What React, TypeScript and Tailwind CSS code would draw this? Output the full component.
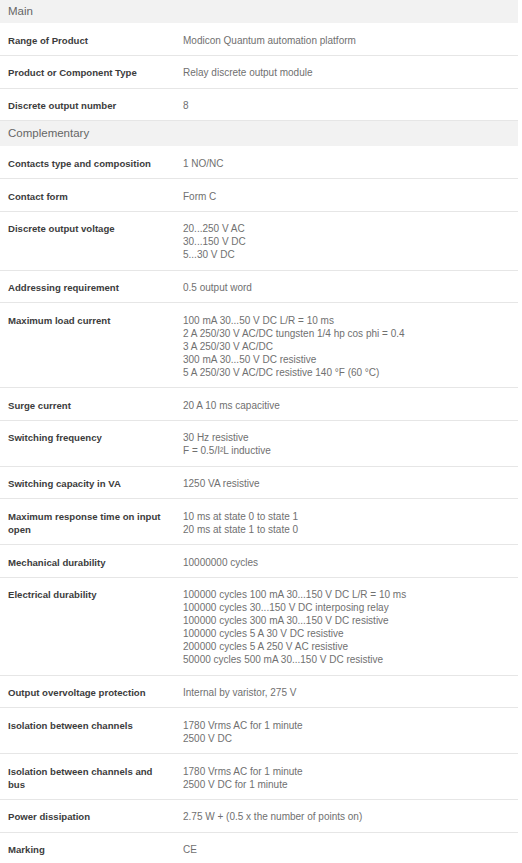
const main = [
  { label: "Range of Product", value: ["Modicon Quantum automation platform"] },
  { label: "Product or Component Type", value: ["Relay discrete output module"] },
  { label: "Discrete output number", value: ["8"] },
];

const complementary = [
  { label: "Contacts type and composition", value: ["1 NO/NC"] },
  { label: "Contact form", value: ["Form C"] },
  { label: "Discrete output voltage", value: ["20...250 V AC", "30...150 V DC", "5...30 V DC"] },
  { label: "Addressing requirement", value: ["0.5 output word"] },
  {
    label: "Maximum load current",
    value: [
      "100 mA 30...50 V DC L/R = 10 ms",
      "2 A 250/30 V AC/DC tungsten 1/4 hp cos phi = 0.4",
      "3 A 250/30 V AC/DC",
      "300 mA 30...50 V DC resistive",
      "5 A 250/30 V AC/DC resistive 140 °F (60 °C)",
    ],
  },
  { label: "Surge current", value: ["20 A 10 ms capacitive"] },
  { label: "Switching frequency", value: ["30 Hz resistive", "F = 0.5/I²L inductive"] },
  { label: "Switching capacity in VA", value: ["1250 VA resistive"] },
  {
    label: "Maximum response time on input open",
    value: ["10 ms at state 0 to state 1", "20 ms at state 1 to state 0"],
  },
  { label: "Mechanical durability", value: ["10000000 cycles"] },
  {
    label: "Electrical durability",
    value: [
      "100000 cycles 100 mA 30...150 V DC L/R = 10 ms",
      "100000 cycles 30...150 V DC interposing relay",
      "100000 cycles 300 mA 30...150 V DC resistive",
      "100000 cycles 5 A 30 V DC resistive",
      "200000 cycles 5 A 250 V AC resistive",
      "50000 cycles 500 mA 30...150 V DC resistive",
    ],
  },
  { label: "Output overvoltage protection", value: ["Internal by varistor, 275 V"] },
  { label: "Isolation between channels", value: ["1780 Vrms AC for 1 minute", "2500 V DC"] },
  {
    label: "Isolation between channels and bus",
    value: ["1780 Vrms AC for 1 minute", "2500 V DC for 1 minute"],
  },
  { label: "Power dissipation", value: ["2.75 W + (0.5 x the number of points on)"] },
  { label: "Marking", value: ["CE"] },
];

const Row = ({ label, value }: { label: string; value: string[] }) => (
  <div className="grid grid-cols-[175px_1fr] border-b border-[#e6e6e6] pt-[10.5px] pb-[8.25px] leading-[13px]">
    <div className="pl-2 pr-1 text-[9.6px] font-bold text-[#3c3c3c]">{label}</div>
    <div className="pl-2 pr-2 text-[10px] text-[#707070]">
      {value.map((v, i) => (
        <div key={i}>{v}</div>
      ))}
    </div>
  </div>
);

export default function App() {
  return (
    <div className="w-[518px] bg-white font-['Liberation_Sans',Arial,sans-serif]">
      <div className="flex h-[23px] items-center bg-[#f2f2f2] pl-2 text-[11.5px] text-[#666]">Main</div>
      {main.map((r) => (
        <Row key={r.label} {...r} />
      ))}
      <div className="flex h-[25px] items-center bg-[#f2f2f2] pl-2 text-[11.5px] text-[#666]">Complementary</div>
      {complementary.map((r) => (
        <Row key={r.label} {...r} />
      ))}
    </div>
  );
}
